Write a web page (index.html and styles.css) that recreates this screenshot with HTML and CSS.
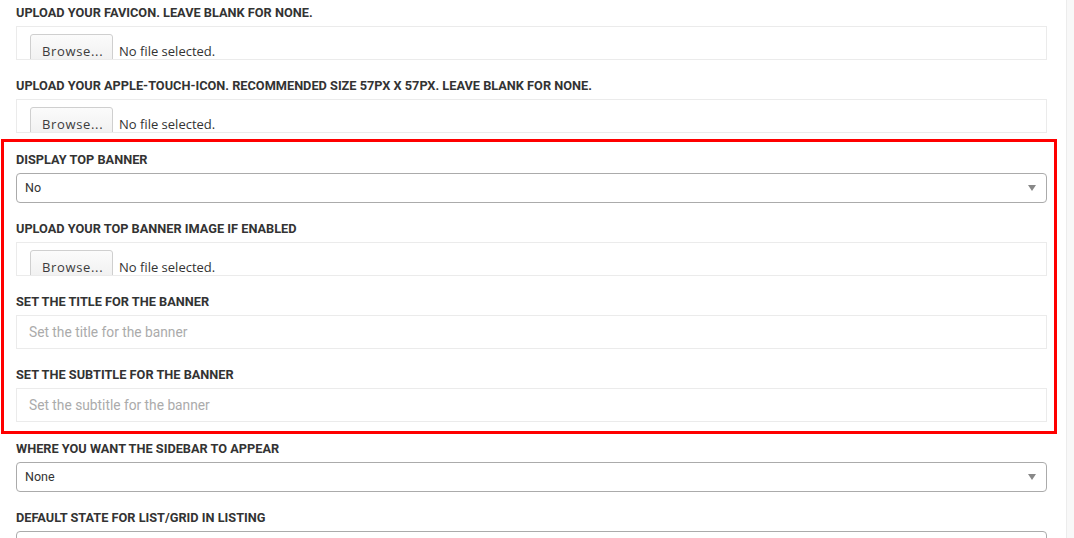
FILE: index.html
```html
<!DOCTYPE html>
<html lang="en">
<head>
<meta charset="utf-8">
<title>Theme options</title>
<link rel="stylesheet" href="styles.css">
</head>
<body>
<div class="page">
  <main class="options">
    <div class="group">
      <label class="label">Upload your favicon. Leave blank for none.</label>
      <div class="file">
        <span class="file-btn">Browse...</span>
        <span class="file-name">No file selected.</span>
      </div>
    </div>
    <div class="group">
      <label class="label">Upload your apple-touch-icon. Recommended size 57px x 57px. Leave blank for none.</label>
      <div class="file">
        <span class="file-btn">Browse...</span>
        <span class="file-name">No file selected.</span>
      </div>
    </div>
    <div class="group">
      <label class="label">Display top banner</label>
      <div class="select"><span class="select-value">No</span><span class="caret"></span></div>
    </div>
    <div class="group">
      <label class="label">Upload your top banner image if enabled</label>
      <div class="file">
        <span class="file-btn">Browse...</span>
        <span class="file-name">No file selected.</span>
      </div>
    </div>
    <div class="group">
      <label class="label">Set the title for the banner</label>
      <input class="text" type="text" placeholder="Set the title for the banner">
    </div>
    <div class="group">
      <label class="label">Set the subtitle for the banner</label>
      <input class="text" type="text" placeholder="Set the subtitle for the banner">
    </div>
    <div class="group">
      <label class="label">Where you want the sidebar to appear</label>
      <div class="select"><span class="select-value">None</span><span class="caret"></span></div>
    </div>
    <div class="group">
      <label class="label">Default state for list/grid in listing</label>
      <div class="select select-cut"><span class="caret"></span></div>
    </div>
    <div class="highlight"></div>
  </main>
  <div class="gutter"></div>
</div>
</body>
</html>
```

FILE: styles.css
```css
* { box-sizing: border-box; }
html, body { margin: 0; padding: 0; background: #fff; }
body { font-family: Roboto, "Liberation Sans", Arial, sans-serif; color: #333; overflow: hidden; height: 538px; }

.page { display: flex; height: 538px; }

.options {
  position: relative;
  flex: 1;
  padding: 2px 19px 0 16px;
  border-right: 1px solid #ececec;
}

.gutter { width: 7px; background: #f8f8f8; }

.group { margin-bottom: 15.3px; }

.label {
  display: block;
  font-size: 12.75px;
  font-weight: 700;
  line-height: 21px;
  margin-bottom: 3px;
  text-transform: uppercase;
  color: #333;
}

.file {
  display: flex;
  align-items: flex-start;
  height: 34px;
  border: 1px solid #ebebeb;
  padding: 7px 13px 0;
  overflow: hidden;
  font-family: "Open Sans", Roboto, sans-serif;
  font-size: 13px;
}

.file-btn {
  flex: none;
  width: 83px;
  height: 32px;
  padding: 7px 0 0 11px;
  border: 1px solid #cfcfcf;
  border-radius: 3px;
  background: linear-gradient(#fbfbfb, #efefef);
  color: #3c3c3c;
  line-height: 18px;
  letter-spacing: 0.65px;
}

.file-name {
  margin-left: 6px;
  padding-top: 8px;
  line-height: 18px;
  color: #333;
}

.select {
  display: flex;
  align-items: center;
  justify-content: space-between;
  height: 30px;
  border: 1px solid #ababab;
  border-radius: 4px;
  padding: 0 10px 0 8px;
  font-size: 12.5px;
  color: #333;
}
.select-cut { justify-content: flex-end; }

.caret {
  width: 0; height: 0;
  border-left: 4px solid transparent;
  border-right: 4px solid transparent;
  border-top: 6px solid #888;
}

.text {
  display: block;
  width: 100%;
  height: 34px;
  border: 1px solid #ebebeb;
  padding: 0 12px 1px;
  font-family: Roboto, sans-serif;
  font-size: 13.75px;
  color: #333;
  outline: none;
  background: #fff;
}
.text::placeholder { color: #ababab; }

.highlight {
  position: absolute;
  left: 1px;
  top: 139px;
  width: 1056px;
  height: 294.5px;
  border: 3px solid #f00;
  pointer-events: none;
}
```
